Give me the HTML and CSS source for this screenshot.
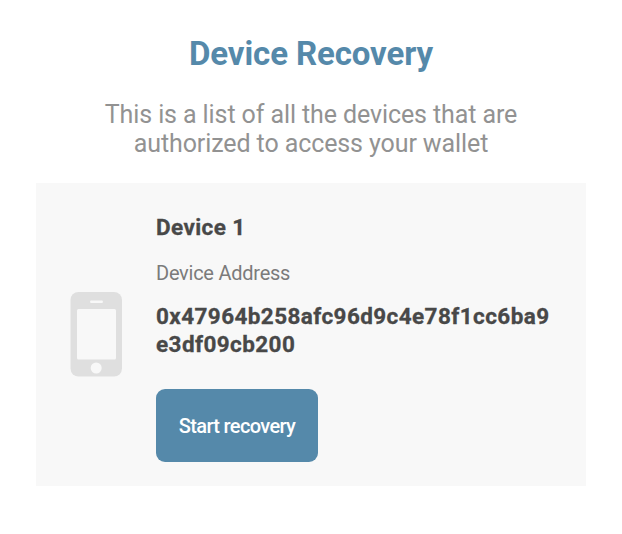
FILE: index.html
```html
<!DOCTYPE html>
<html lang="en">
<head>
<meta charset="utf-8">
<title>Device Recovery</title>
<link rel="stylesheet" href="styles.css">
</head>
<body>
<main class="page">
  <h1 class="title">Device Recovery</h1>
  <p class="intro">This is a list of all the devices that are<br>authorized to access your wallet</p>
  <section class="card">
    <svg class="phone" viewBox="0 0 52 85" aria-hidden="true">
      <rect x="0.5" width="51.500" height="84.500" rx="8" fill="#dfdfdf"/>
      <rect x="20" y="8.5" width="13" height="2.5" rx="1.2" fill="#f8f8f8"/>
      <rect x="7" y="17" width="39" height="50.500" rx="1.500" fill="#f8f8f8"/>
      <circle cx="26.2" cy="76" r="5.5" fill="#f8f8f8"/>
    </svg>
    <div class="details">
      <h2 class="name">Device 1</h2>
      <p class="label">Device Address</p>
      <p class="address">0x47964b258afc96d9c4e78f1cc6ba9<br>e3df09cb200</p>
      <button class="button" type="button">Start recovery</button>
    </div>
  </section>
</main>
</body>
</html>
```
FILE: styles.css
```css
* { box-sizing: border-box; }
body { margin: 0; background: #fff; font-family: Roboto, sans-serif; }
.page { height: 534px; padding: 34px 36px 0; }
.title { margin: 0; text-align: center; font-size: 33px; line-height: 40px; font-weight: 700; color: #5589aa; letter-spacing: -0.1px; }
.intro { margin: 26px 0 25px; text-align: center; font-size: 25px; line-height: 29px; color: #929292; letter-spacing: -0.1px; }
.card { display: flex; align-items: center; height: 303px; padding-left: 34px; background: #f8f8f8; }
.phone { display: block; width: 52px; height: 85px; }
.details { flex: 1; margin-left: 34px; height: 303px; padding-top: 30px; }
.name { margin: 0; font-size: 22.5px; line-height: 28px; color: #484848; letter-spacing: 0.4px; -webkit-text-stroke: 0.3px #484848; }
.label { margin: 20px 0 18px; font-size: 20px; line-height: 24px; color: #7b7b7b; letter-spacing: -0.25px; }
.address { margin: 0 0 31px; font-size: 22.5px; line-height: 27.5px; font-weight: 700; color: #484848; letter-spacing: 0.41px; -webkit-text-stroke: 0.3px #484848; }
.button { display: block; width: 162px; height: 73px; padding: 0; border: 0; border-radius: 9px; background: #5589aa; color: #fff; font: 500 20px/24px Roboto, sans-serif; letter-spacing: -0.65px; }
```
